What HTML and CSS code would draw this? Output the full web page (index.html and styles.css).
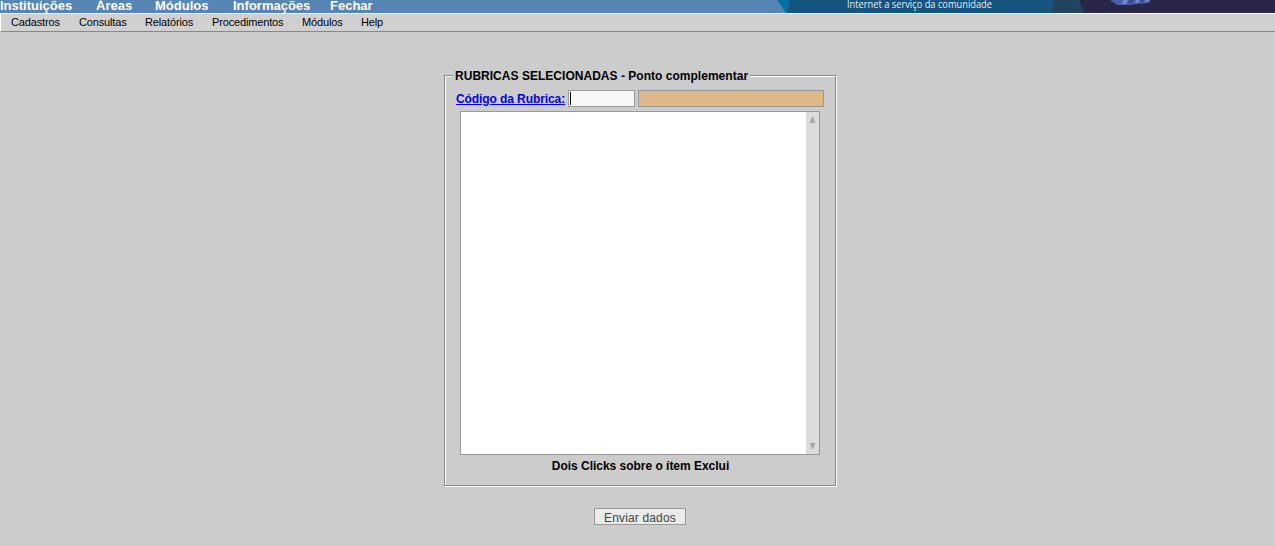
FILE: index.html
```html
<!DOCTYPE html>
<html lang="pt-BR">
<head>
<meta charset="utf-8">
<title>Ponto complementar</title>
<link rel="stylesheet" href="styles.css">
</head>
<body>
<header class="topbar">
  <nav class="main-nav">
    <span class="nav-a">Instituições</span><span class="nav-b">Áreas</span><span class="nav-c">Módulos</span><span class="nav-d">Informações</span><span>Fechar</span>
  </nav>
  <svg class="banner" width="499" height="13" viewBox="776 0 499 13">
    <defs><filter id="soft"><feGaussianBlur stdDeviation="0.5"/></filter></defs>
    <path fill="#0870a4" d="M777 0H792V13H786Z"/>
    <path fill="#14547e" d="M790 0H1056V13H787Z"/>
    <path fill="#224362" d="M1054 0H1090V13H1052Z"/>
    <path fill="#282748" d="M1079 0H1275V13H1084Z"/>
    <g filter="url(#soft)">
      <path fill="#4d5fa8" d="M1110 0H1151L1148 3L1137 4L1128 5L1117 5Z"/>
      <path fill="#7484c4" d="M1123 0H1128L1126 4H1122ZM1136 0H1140L1138 3H1135ZM1146 0H1150L1147 2H1144Z"/>
      <path fill="#3a4790" d="M1129 0H1134L1132 3H1128ZM1141 0H1144L1143 2H1140Z"/>
    </g>
    <text class="slogan" x="847" y="8" textLength="145" lengthAdjust="spacingAndGlyphs">Internet a serviço da comunidade</text>
  </svg>
</header>
<nav class="menu">
  <span>Cadastros</span><span>Consultas</span><span>Relatórios</span><span>Procedimentos</span><span>Módulos</span><span>Help</span>
</nav>
<main class="content">
  <fieldset class="panel">
    <legend>RUBRICAS SELECIONADAS - Ponto complementar</legend>
    <div class="row">
      <a class="code-link" href="#">Código da Rubrica:</a>
      <div class="code-input"><span class="caret"></span></div>
      <div class="description"></div>
    </div>
    <div class="list">
      <div class="scrollbar">
        <svg width="7" height="6" viewBox="0 0 7 6"><path fill="#a8a8a8" d="M3 0H4L6.5 6H0.5Z"/></svg>
        <svg width="7" height="6" viewBox="0 0 7 6"><path fill="#a8a8a8" d="M0.5 0H6.5L4 6H3Z"/></svg>
      </div>
    </div>
    <div class="hint">Dois Clicks sobre o ítem Exclui</div>
  </fieldset>
  <button class="send" type="button">Enviar dados</button>
</main>
</body>
</html>
```
FILE: styles.css
```css
* { box-sizing: border-box; }
body {
  margin: 0;
  height: 546px;
  overflow: hidden;
  background: #ccc;
  color: #000;
  font: 12px/14px "Liberation Sans", Arial, sans-serif;
}
.topbar {
  display: flex;
  justify-content: space-between;
  height: 13px;
  background: #5786b4;
}
.main-nav {
  display: flex;
  color: #fff;
  font-size: 13px;
  font-weight: bold;
  line-height: 11px;
  white-space: nowrap;
}
.nav-a { width: 96px; }
.nav-b { width: 59px; }
.nav-c { width: 78px; }
.nav-d { width: 97px; }
.banner { display: block; flex: none; }
.slogan { font: 10.5px "Open Sans", sans-serif; fill: #e4eef4; }
.menu {
  display: grid;
  grid-template-columns: 68px 66px 67px 90px 59px auto;
  height: 19px;
  padding-left: 10px;
  background: #d0d0d0;
  border: 1px solid #fff;
  border-right: 0;
  border-bottom-color: #888;
  font-size: 11px;
  line-height: 17px;
  letter-spacing: -0.15px;
}
.content {
  display: flex;
  flex-direction: column;
  align-items: center;
  padding: 37px 0 0 5px;
}
.panel {
  width: 392px;
  height: 417px;
  margin: 0 0 1px;
  padding: 0 10px 0 11px;
  border: 1px solid #888;
  box-shadow: inset 1px 1px #fff, 1px 1px #fff;
}
.panel legend {
  margin-left: -3px;
  padding: 0 2px;
  height: 13px;
  background: #ccc;
  font-weight: bold;
  letter-spacing: 0.025px;
}
.row {
  display: flex;
  align-items: center;
  height: 17px;
  margin-top: 8px;
}
.code-link {
  width: 112px;
  color: #00e;
  font-weight: bold;
  letter-spacing: -0.09px;
}
.code-input {
  width: 67px;
  height: 17px;
  padding: 1px;
  border: 1px solid #999;
  background: #f8f8f8;
}
.caret {
  display: block;
  width: 1px;
  height: 13px;
  background: #000;
}
.description {
  width: 186px;
  height: 17px;
  margin-left: 3px;
  border: 1px solid #999;
  background: #deb887;
}
.list {
  display: flex;
  justify-content: flex-end;
  width: 360px;
  height: 344px;
  margin: 4px 0 0 4px;
  border: 1px solid #999;
  background: #fff;
}
.scrollbar {
  display: flex;
  flex-direction: column;
  align-items: center;
  justify-content: space-between;
  width: 13px;
  padding: 5px 0;
  border-radius: 4px;
  background: #dcdcdc;
  box-shadow: 0 0 0 4px #d4d4d4;
  clip-path: inset(0);
}
.hint {
  width: 361px;
  margin: 4px 0 0 4px;
  text-align: center;
  font-weight: bold;
  letter-spacing: -0.02px;
}
.send {
  width: 92px;
  height: 17px;
  margin-top: 21px;
  padding: 2px 0 0;
  border: 1px solid #999;
  background: #eaeaea;
  color: #444;
  font: 12px/14px "Liberation Sans", Arial, sans-serif;
  letter-spacing: 0.15px;
}
```
